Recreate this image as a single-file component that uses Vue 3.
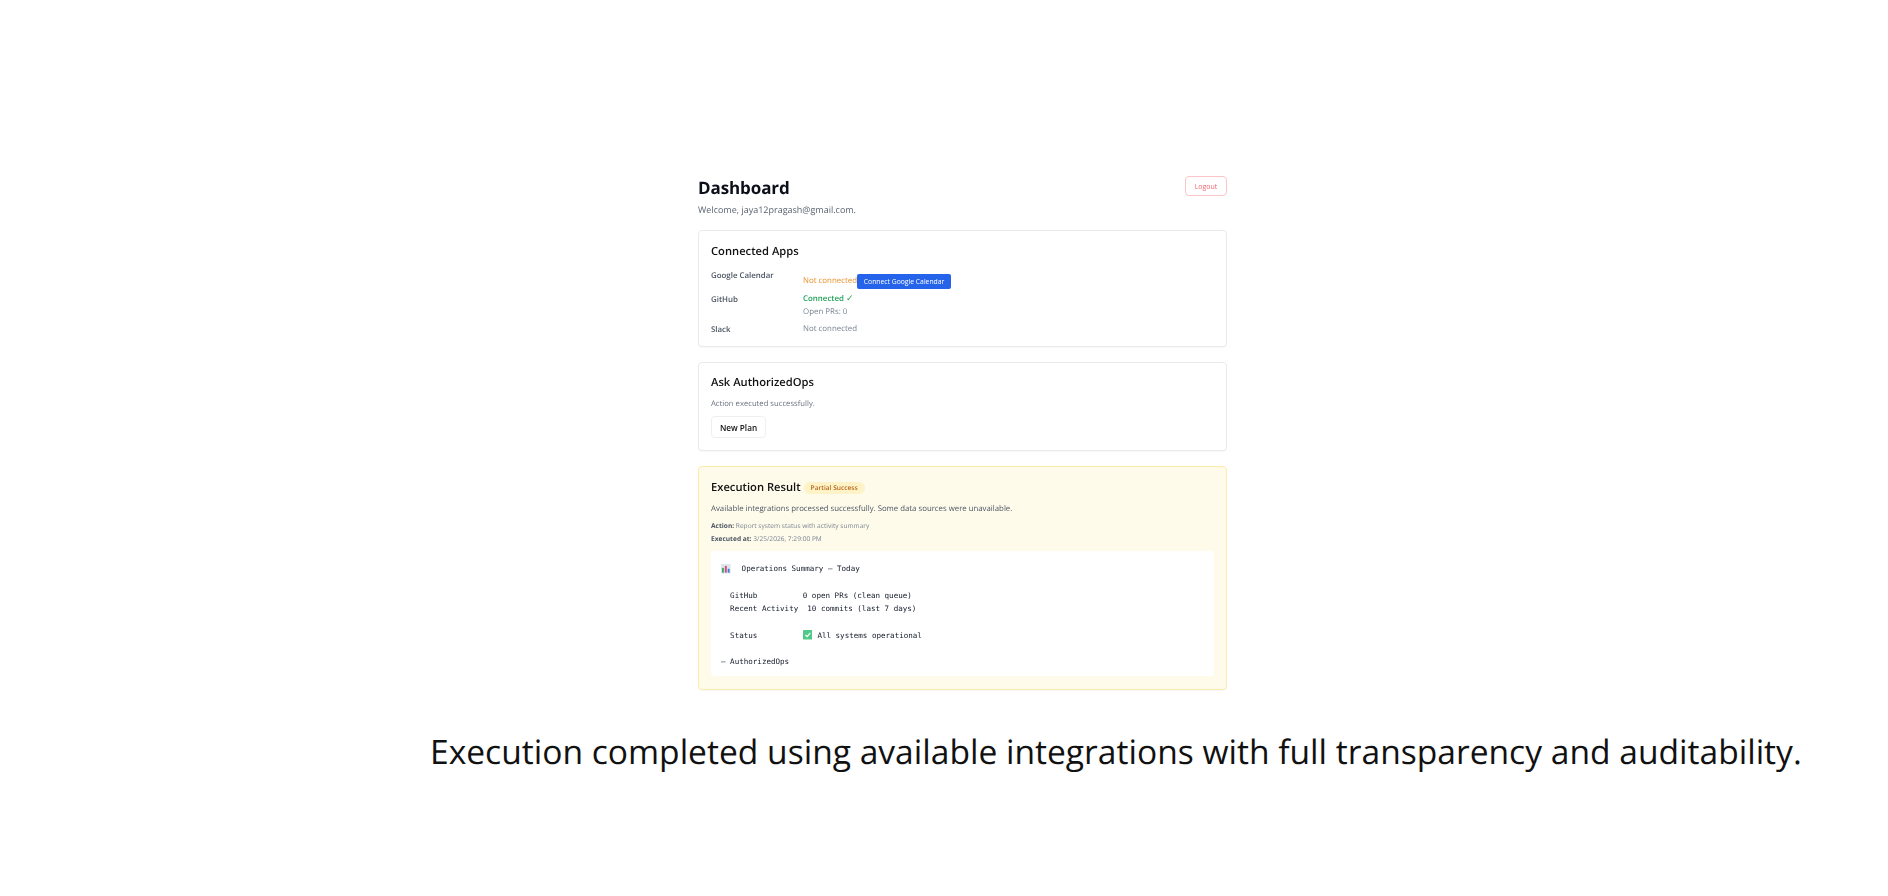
<template>
  <main class="page">
    <section class="dash">
      <header class="head">
        <div>
          <h1>Dashboard</h1>
          <p class="welcome">Welcome, jaya12pragash@gmail.com.</p>
        </div>
        <button class="logout">Logout</button>
      </header>

      <div class="card apps-card">
        <h2>Connected Apps</h2>
        <div class="apps">
          <div class="name">Google Calendar</div>
          <div class="val gcal"><span class="orange">Not connected</span><button class="connect">Connect Google Calendar</button></div>
          <div class="name github">GitHub</div>
          <div class="val">
            <div class="green">Connected <span class="tick">✓</span></div>
            <div class="gray prs">Open PRs: 0</div>
          </div>
          <div class="name slack">Slack</div>
          <div class="val gray">Not connected</div>
        </div>
      </div>

      <div class="card ask">
        <h2>Ask AuthorizedOps</h2>
        <p class="ok">Action executed successfully.</p>
        <button class="plan">New Plan</button>
      </div>

      <div class="card result">
        <div class="rhead">
          <h2>Execution Result</h2>
          <span class="badge">Partial Success</span>
        </div>
        <p class="desc">Available integrations processed successfully. Some data sources were unavailable.</p>
        <p class="meta"><b>Action:</b> Report system status with activity summary</p>
        <p class="meta"><b>Executed at:</b> 3/25/2026, 7:29:00 PM</p>
        <div class="out">
          <div class="line">
            <svg class="emoji" viewBox="0 0 10 10"><rect width="10" height="10" fill="#dfe7ee"/><rect x="1" y="4" width="2" height="5" fill="#3aa76d"/><rect x="4" y="2" width="2" height="7" fill="#d9477a"/><rect x="7" y="5" width="2" height="4" fill="#3b82d6"/></svg>
            <span class="t1">{{ titleText }}</span>
          </div>
          <div class="line gap">{{ rowGithub }}</div>
          <div class="line">{{ rowActivity }}</div>
          <div class="line gap"><span>{{ rowStatus }}</span><svg class="emoji check" viewBox="0 0 10 10"><rect width="10" height="10" rx="1" fill="#4fc98a"/><path d="M2.5 5.2 4.4 7 7.6 3" fill="none" stroke="#fff" stroke-width="1.2"/></svg><span class="t2">{{ statusText }}</span></div>
          <div class="line gap">— AuthorizedOps</div>
        </div>
      </div>
    </section>
    <p class="caption">Execution completed using available integrations with full transparency and auditability.</p>
  </main>
</template>

<script setup>
const titleText = 'Operations Summary — Today'
const rowGithub = '  GitHub          0 open PRs (clean queue)'
const rowActivity = '  Recent Activity  10 commits (last 7 days)'
const rowStatus = '  Status          '
const statusText = 'All systems operational'
</script>

<style>
html, body { margin: 0; background: #fff; }
</style>

<style scoped>
.page {
  width: 1888px;
  height: 896px;
  box-sizing: border-box;
  padding-top: 176px;
  font-family: "Open Sans", "Noto Sans", sans-serif;
  color: #111;
  overflow: hidden;
  text-rendering: geometricPrecision;
}
.dash {
  width: 529px;
  margin-left: 698px;
  display: flex;
  flex-direction: column;
  gap: 15px;
  filter: blur(0.35px);
}
.head {
  display: flex;
  justify-content: space-between;
  align-items: flex-start;
  margin-bottom: -2px;
}
h1 { margin: 0; font-size: 17px; line-height: 24px; font-weight: 700; color: #0b0f19; letter-spacing: -0.1px; }
.welcome { margin: 3px 0 0; font-size: 9px; line-height: 14px; color: #5b6472; }
.logout {
  width: 42px; height: 20px;
  padding: 0; font: inherit; font-size: 7px;
  color: #ef6a72; background: #fff;
  border: 1px solid #fbc4c8; border-radius: 4px;
}
.card {
  border: 1px solid #e8eaee;
  border-radius: 4px;
  background: #fff;
  padding: 12px;
  box-shadow: 0 1px 1px rgba(0,0,0,.03);
}
.apps-card { padding-top: 12px; padding-bottom: 10px; }
.ask { padding-top: 11px; padding-bottom: 12px; }
h2 { margin: 0; font-size: 11.2px; line-height: 17px; font-weight: 600; color: #111; }
.apps {
  display: grid;
  grid-template-columns: 92px 1fr;
  margin-top: 10px;
  font-size: 7.9px;
  line-height: 12px;
}
.name { font-weight: 600; color: #4b5563; }
.github { margin-top: 1px; }
.slack { margin-top: 1px; }
.gcal { display: flex; align-items: center; padding-top: 3px; padding-bottom: 4px; }
.orange { color: #e8912c; margin-bottom: 1px; }
.green { color: #22a35a; font-weight: 600; }
.tick { font-weight: 400; font-size: 9px; line-height: 12px; font-family: "DejaVu Sans", sans-serif; }
.gray { color: #7b8494; }
.prs { margin-top: 1px; padding-bottom: 5px; }
.connect {
  width: 94px; height: 15px; padding: 0; margin-top: 1px;
  background: #2563eb; color: #fff; border: 0; border-radius: 2px;
  font: inherit; font-size: 6.8px;
}
.ok { margin: 7px 0 0; font-size: 7.7px; line-height: 12px; color: #6b7280; }
.plan {
  display: block; margin-top: 6px;
  width: 55px; height: 22px; padding: 0;
  background: #fff; border: 1px solid #edf0f3; border-radius: 4px;
  font: inherit; font-size: 8.2px; font-weight: 600; color: #111;
}
.result { background: #fffbea; border-color: #fcebaa; padding-top: 12px; padding-bottom: 13px; }
.rhead { display: flex; align-items: center; gap: 3px; }
.badge {
  padding: 0 7px; height: 12px; line-height: 12px;
  background: #fef3c7; color: #b7661c; border-radius: 6px;
  font-size: 6.6px; font-weight: 600;
}
.desc { margin: 7px 0 6px; font-size: 7.8px; line-height: 12px; color: #4b5563; }
.meta { margin: 0 0 2px; font-size: 6.6px; line-height: 10px; color: #7b8494; }
.meta + .meta { margin-top: 3px; }
.meta b { color: #4b5563; }
.out {
  margin-top: 7px;
  background: #fff;
  border-radius: 4px;
  padding: 11px 10px;
  height: 125px;
  box-sizing: border-box;
  font-family: "DejaVu Sans Mono", "Liberation Mono", monospace;
  font-size: 7.56px;
  line-height: 13.5px;
  color: #111827;
}
.line { white-space: pre; display: flex; align-items: center; height: 13.5px; }
.gap { margin-top: 13px; }
.emoji { width: 9.6px; height: 9.6px; flex: none; }
.t1 { margin-left: 11px; }
.t2 { margin-left: 5px; }
.caption {
  margin: 39px 0 0 430px;
  font-family: "Open Sans", "Noto Sans", sans-serif;
  font-size: 33.6px;
  line-height: 44px;
  color: #111;
  white-space: nowrap;
}
</style>
